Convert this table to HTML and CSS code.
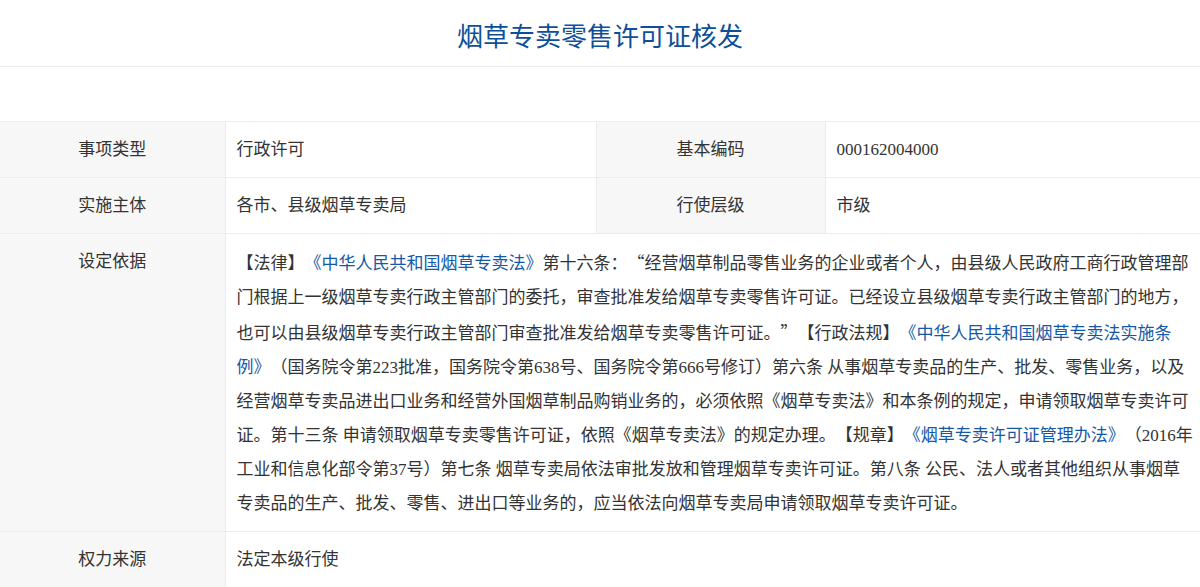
FILE: index.html
```html
<!DOCTYPE html>
<html lang="zh-CN">
<head>
<meta charset="utf-8">
<title>烟草专卖零售许可证核发</title>
<link rel="stylesheet" href="styles.css">
</head>
<body>
<header class="page-head">
  <h1 class="title">烟草专卖零售许可证核发</h1>
</header>
<div class="spacer"></div>
<table class="info">
  <colgroup>
    <col class="c1"><col class="c2"><col class="c3"><col class="c4">
  </colgroup>
  <tr>
    <th>事项类型</th>
    <td>行政许可</td>
    <th>基本编码</th>
    <td>000162004000</td>
  </tr>
  <tr>
    <th>实施主体</th>
    <td>各市、县级烟草专卖局</td>
    <th>行使层级</th>
    <td>市级</td>
  </tr>
  <tr>
    <th class="top">设定依据</th>
    <td colspan="3" class="long">【法律】<a class="link">《中华人民共和国烟草专卖法》</a>第十六条：<span class="q">“</span>经营烟草制品零售业务的企业或者个人，由县级人民政府工商行政管理部门根据上一级烟草专卖行政主管部门的委托，审查批准发给烟草专卖零售许可证。已经设立县级烟草专卖行政主管部门的地方，也可以由县级烟草专卖行政主管部门审查批准发给烟草专卖零售许可证。<span class="q">”</span>【行政法规】<a class="link">《中华人民共和国烟草专卖法实施条例》</a>（国务院令第223批准，国务院令第638号、国务院令第666号修订）第六条 从事烟草专卖品的生产、批发、零售业务，以及经营烟草专卖品进出口业务和经营外国烟草制品购销业务的，必须依照《烟草专卖法》和本条例的规定，申请领取烟草专卖许可证。第十三条 申请领取烟草专卖零售许可证，依照《烟草专卖法》的规定办理。【规章】<a class="link">《烟草专卖许可证管理办法》</a>（2016年工业和信息化部令第37号）第七条 烟草专卖局依法审批发放和管理烟草专卖许可证。第八条 公民、法人或者其他组织从事烟草专卖品的生产、批发、零售、进出口等业务的，应当依法向烟草专卖局申请领取烟草专卖许可证。</td>
  </tr>
  <tr>
    <th>权力来源</th>
    <td colspan="3">法定本级行使</td>
  </tr>
</table>
</body>
</html>
```

FILE: styles.css
```css
html, body {
  margin: 0;
  padding: 0;
  background: #ffffff;
}

body {
  font-family: "Liberation Serif", "Noto Sans CJK SC", serif;
  color: #333333;
  text-spacing-trim: space-all;
  text-autospace: no-autospace;
}

.page-head {
  height: 67px;
  box-sizing: border-box;
  padding-top: 15px;
  border-bottom: 1px solid #ebebeb;
  text-align: center;
}

.title {
  margin: 0;
  font-family: "Noto Sans CJK SC", sans-serif;
  font-weight: 400;
  font-size: 26px;
  line-height: 40px;
  color: #0d4f98;
}

.spacer {
  height: 54px;
}

.info {
  width: 100%;
  border-collapse: collapse;
  table-layout: fixed;
  font-size: 17px;
  line-height: 34px;
}

.c1 { width: 225px; }
.c2 { width: 371px; }
.c3 { width: 229px; }
.c4 { width: auto; }

.info th,
.info td {
  border: 1px solid #ececec;
  padding: 10.5px 5px 10.5px 11px;
  vertical-align: middle;
}

.info tr > :first-child { border-left: none; }
.info tr > :last-child { border-right: none; }

.info th {
  background: #f7f7f7;
  font-weight: 400;
  text-align: center;
  color: #333333;
  padding-right: 11px;
}

.info td {
  text-align: left;
  background: #ffffff;
}

.info th.top {
  vertical-align: top;
}

.long {
  word-break: break-all;
}

.link {
  color: #1458a8;
  text-decoration: none;
}

.q {
  font-family: "Noto Sans CJK SC", sans-serif;
}
```
